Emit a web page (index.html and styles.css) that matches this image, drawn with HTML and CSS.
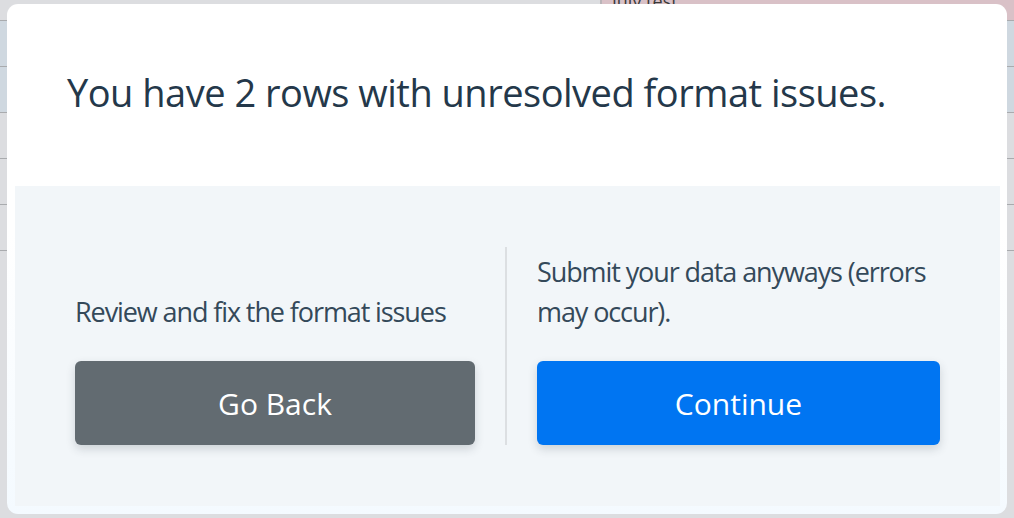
FILE: index.html
```html
<!DOCTYPE html>
<html>
<head>
<meta charset="utf-8">
<link rel="stylesheet" href="styles.css">
</head>
<body>
<div class="page">
  <div class="bg-header">
    <div class="bg-head-left"></div>
    <div class="bg-head-right"><span class="bg-title">July test</span></div>
  </div>
  <div class="bg-row bg-row--blue"></div>
  <div class="bg-row bg-row--blue"></div>
  <div class="bg-row"></div>
  <div class="bg-row"></div>
  <div class="bg-row"></div>
</div>
<div class="modal">
  <div class="modal-head">
    <h1 class="modal-title">You have 2 rows with unresolved format issues.</h1>
  </div>
  <div class="modal-panel">
    <div class="choice">
      <p class="choice-text">Review and fix the format issues</p>
      <button class="btn btn--back">Go Back</button>
    </div>
    <div class="divider"></div>
    <div class="choice">
      <p class="choice-text">Submit your data anyways (errors may occur).</p>
      <button class="btn btn--continue">Continue</button>
    </div>
  </div>
</div>
</body>
</html>
```
FILE: styles.css
```css
* { box-sizing: border-box; }
html, body { margin: 0; padding: 0; }
body {
  width: 1014px;
  height: 518px;
  overflow: hidden;
  background: #dcdde0;
  font-family: "Open Sans", "Liberation Sans", sans-serif;
  position: relative;
}
.page { display: flex; flex-direction: column; }
.bg-header { display: flex; height: 21px; border-bottom: 1px solid #a9abae; }
.bg-head-left { width: 600px; }
.bg-head-right {
  flex: 1;
  background: #d9c1c7;
  border-left: 2px solid #b9b4b8;
  padding-left: 10px;
  overflow: hidden;
}
.bg-title { font-size: 18px; color: #3a3a3a; line-height: 10px; display: block; margin-top: -4px; }
.bg-row { height: 46px; border-bottom: 1px solid #a9abae; }
.bg-row--blue { background: #cfd8e0; }

.modal {
  position: absolute;
  left: 7px;
  top: 4px;
  width: 1000px;
  height: 510px;
  border-radius: 11px;
  background: linear-gradient(#ffffff 45%, #f4faff);
  display: flex;
  flex-direction: column;
}
.modal-head {
  height: 182px;
  display: flex;
  align-items: center;
  padding: 0 0 6px 60px;
}
.modal-title {
  margin: 0;
  font-weight: 400;
  font-size: 38px;
  color: #24384a;
  letter-spacing: -0.5px;
}
.modal-panel {
  flex: 1;
  margin: 0 7px 8px 8px;
  background: #f2f6f9;
  padding: 61px 60px 61px 60px;
  display: grid;
  grid-template-columns: 400px 2px 1fr;
  column-gap: 30px;
  align-items: end;
}
.choice {
  display: flex;
  flex-direction: column;
}
.choice-text {
  margin: 0 0 29px 0;
  font-size: 27px;
  line-height: 40px;
  color: #34495a;
  letter-spacing: -1.1px;
}
.divider {
  width: 2px;
  align-self: stretch;
  background: #dcdfe2;
}
.btn {
  height: 84px;
  border: none;
  border-radius: 6px;
  font-family: "Open Sans", "Liberation Sans", sans-serif;
  font-size: 30px;
  font-weight: 400;
  color: #ffffff;
  box-shadow: 0 4px 10px rgba(40, 50, 60, 0.18);
}
.btn--back { background: #626b71; }
.btn--continue { background: #0075f2; }
```
